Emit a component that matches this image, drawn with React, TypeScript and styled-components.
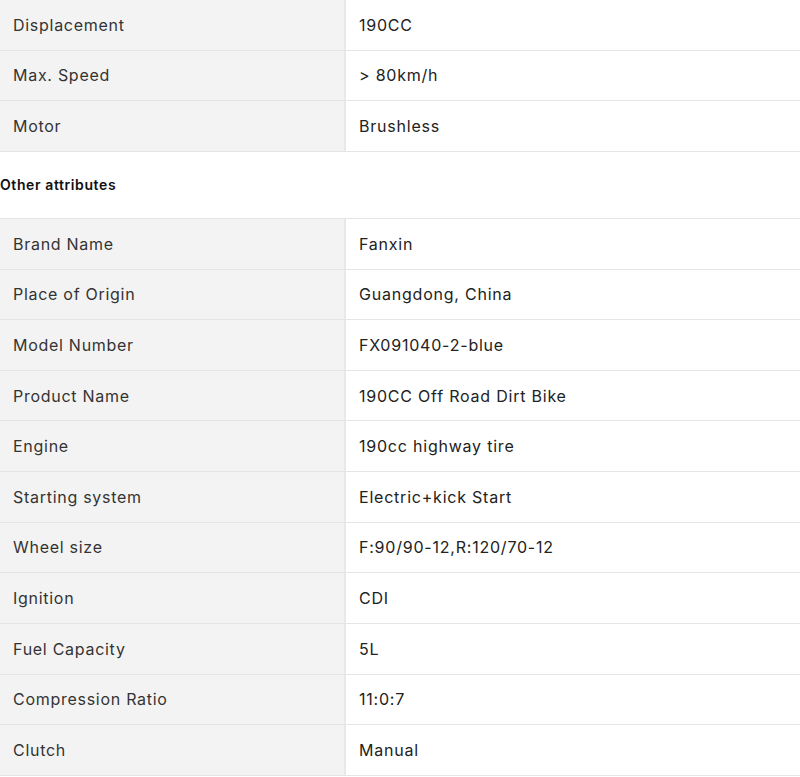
import React from "react";
import styled, { createGlobalStyle } from "styled-components";

const Global = createGlobalStyle`
  html, body { margin: 0; padding: 0; background: #fff; }
  body { font-family: Inter, "Noto Sans", sans-serif; color: #222; }
`;

const Page = styled.div`
  width: 800px;
  display: flex;
  flex-direction: column;
`;

const Table = styled.div<{ $topBorder?: boolean }>`
  display: flex;
  flex-direction: column;
  border-top: ${(p) => (p.$topBorder ? "1px solid #e5e5e5" : "none")};
`;

const Row = styled.div`
  display: grid;
  grid-template-columns: 346px 1fr;
  height: 50.64px;
  box-sizing: border-box;
  border-bottom: 1px solid #e5e5e5;
`;

const Label = styled.div`
  background: #f3f3f3;
  border-right: 2px solid #e8e8e8;
  display: flex;
  align-items: center;
  padding-left: 13px;
  font-size: 16px;
  color: #333;
  letter-spacing: 0.72px;
`;

const Value = styled.div`
  display: flex;
  align-items: center;
  padding-left: 13px;
  font-size: 16px;
  color: #222;
  letter-spacing: 0.78px;
`;

const Heading = styled.div`
  height: 66px;
  display: flex;
  align-items: center;
  font-size: 14px;
  font-weight: 600;
  color: #111;
  letter-spacing: 0.6px;
  padding-bottom: 1px;
  box-sizing: border-box;
`;

const first: [string, string][] = [
  ["Displacement", "190CC"],
  ["Max. Speed", "> 80km/h"],
  ["Motor", "Brushless"],
];

const other: [string, string][] = [
  ["Brand Name", "Fanxin"],
  ["Place of Origin", "Guangdong, China"],
  ["Model Number", "FX091040-2-blue"],
  ["Product Name", "190CC Off Road Dirt Bike"],
  ["Engine", "190cc highway tire"],
  ["Starting system", "Electric+kick Start"],
  ["Wheel size", "F:90/90-12,R:120/70-12"],
  ["Ignition", "CDI"],
  ["Fuel Capacity", "5L"],
  ["Compression Ratio", "11:0:7"],
  ["Clutch", "Manual"],
];

export default function App() {
  return (
    <Page>
      <Global />
      <Table>
        {first.map(([k, v]) => (
          <Row key={k}>
            <Label>{k}</Label>
            <Value>{v}</Value>
          </Row>
        ))}
      </Table>
      <Heading>Other attributes</Heading>
      <Table $topBorder>
        {other.map(([k, v]) => (
          <Row key={k}>
            <Label>{k}</Label>
            <Value>{v}</Value>
          </Row>
        ))}
      </Table>
    </Page>
  );
}
